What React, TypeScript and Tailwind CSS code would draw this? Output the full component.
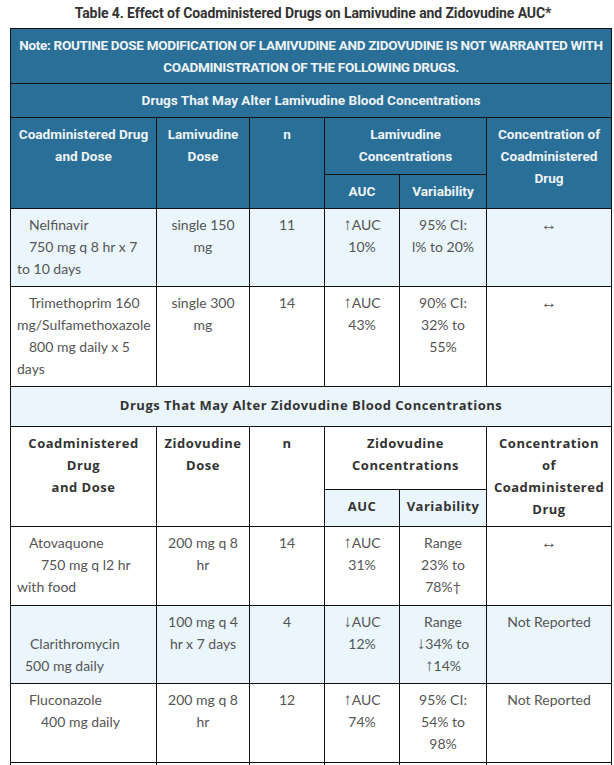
import React from "react";

const body = "font-['Lato','Liberation_Sans',sans-serif] text-[14px] leading-[22px] text-[#555]";
const hdr = "font-['Roboto','Liberation_Sans',sans-serif] font-bold text-[13.6px] leading-[22px] text-[#eef3f6]";
const hdr2 = "font-['Open_Sans','Liberation_Sans',sans-serif] font-bold text-[13px] tracking-[0.5px] leading-[22px] text-[#333]";
const bd = "border border-[#111]";

function T({ s }: { s: string }) {
  const parts = s.split(/([↑↓↔])/);
  return (
    <>
      {parts.map((p, k) =>
        /[↑↓↔]/.test(p) ? (
          <span
            key={k}
            className={`font-['Liberation_Sans',sans-serif] leading-[22px] ${p === "↔" ? "text-[16px]" : "text-[17px]"}`}
          >
            {p}
          </span>
        ) : (
          <React.Fragment key={k}>{p}</React.Fragment>
        )
      )}
    </>
  );
}

type Line = { t: string; i?: number };

function FirstCol({ lines }: { lines: Line[] }) {
  return (
    <div>
      {lines.map((l, k) => (
        <div key={k} className="whitespace-nowrap h-[22px]" style={{ paddingLeft: l.i ?? 0 }}>
          {l.t}
        </div>
      ))}
    </div>
  );
}

function Lines({ lines }: { lines: string[] }) {
  return (
    <div>
      {lines.map((l, k) => (
        <div key={k} className="whitespace-nowrap h-[22px]">
          <T s={l} />
        </div>
      ))}
    </div>
  );
}

type Row = {
  bg: string;
  h: string;
  first: Line[];
  dose: string[];
  n: string;
  auc: string[];
  vari: string[];
  conc: string[];
};

const rows1: Row[] = [
  {
    bg: "bg-[#eaf5fc]",
    h: "h-[78px]",
    first: [
      { t: "Nelfinavir", i: 12 },
      { t: "750 mg q 8 hr x 7", i: 12 },
      { t: "to 10 days" },
    ],
    dose: ["single 150", "mg"],
    n: "11",
    auc: ["↑AUC", "10%"],
    vari: ["95% CI:", "l% to 20%"],
    conc: ["↔"],
  },
  {
    bg: "bg-white",
    h: "h-[100px]",
    first: [
      { t: "Trimethoprim 160", i: 12 },
      { t: "mg/Sulfamethoxazole" },
      { t: "800 mg daily x 5", i: 12 },
      { t: "days" },
    ],
    dose: ["single 300", "mg"],
    n: "14",
    auc: ["↑AUC", "43%"],
    vari: ["90% CI:", "32% to", "55%"],
    conc: ["↔"],
  },
];

const rows2: Row[] = [
  {
    bg: "bg-white",
    h: "h-[79px]",
    first: [
      { t: "Atovaquone", i: 12 },
      { t: "750 mg q l2 hr", i: 24 },
      { t: "with food" },
    ],
    dose: ["200 mg q 8", "hr"],
    n: "14",
    auc: ["↑AUC", "31%"],
    vari: ["Range", "23% to", "78%†"],
    conc: ["↔"],
  },
  {
    bg: "bg-[#eaf5fc]",
    h: "h-[78px]",
    first: [{ t: "" }, { t: "Clarithromycin", i: 13 }, { t: "500 mg daily", i: 8 }],
    dose: ["100 mg q 4", "hr x 7 days"],
    n: "4",
    auc: ["↓AUC", "12%"],
    vari: ["Range", "↓34% to", "↑14%"],
    conc: ["Not Reported"],
  },
  {
    bg: "bg-white",
    h: "h-[79px]",
    first: [
      { t: "Fluconazole", i: 12 },
      { t: "400 mg daily", i: 24 },
    ],
    dose: ["200 mg q 8", "hr"],
    n: "12",
    auc: ["↑AUC", "74%"],
    vari: ["95% CI:", "54% to", "98%"],
    conc: ["Not Reported"],
  },
];

function BodyRow({ r }: { r: Row }) {
  const c = `${bd} ${body} align-top px-[6px] pt-[5px] pb-[4px]`;
  return (
    <tr className={`${r.bg} ${r.h}`}>
      <td className={c}>
        <FirstCol lines={r.first} />
      </td>
      <td className={`${c} text-center`}>
        <Lines lines={r.dose} />
      </td>
      <td className={`${c} text-center`}>
        <Lines lines={[r.n]} />
      </td>
      <td className={`${c} text-center`}>
        <Lines lines={r.auc} />
      </td>
      <td className={`${c} text-center`}>
        <Lines lines={r.vari} />
      </td>
      <td className={`${c} text-center`}>
        <Lines lines={r.conc} />
      </td>
    </tr>
  );
}

export default function App() {
  const hc = `${bd} ${hdr} align-top text-center px-[6px] pt-[5px] pb-[4px] bg-[#2a6f97]`;
  const h2c = `${bd} ${hdr2} align-top text-center px-[4px] pt-[5px] pb-[4px]`;
  return (
    <div className="bg-white w-[614px] h-[765px] overflow-hidden">
      <div className="h-[28px] flex items-center justify-center pl-[12px] pb-[2px] font-['Roboto','Liberation_Sans',sans-serif] font-bold text-[14px] tracking-[-0.1px] text-[#333]">
        Table 4. Effect of Coadministered Drugs on Lamivudine and Zidovudine AUC*
      </div>
      <table className="ml-[10px] w-[601px] table-fixed border-collapse">
        <colgroup>
          <col className="w-[146px]" />
          <col className="w-[93px]" />
          <col className="w-[75px]" />
          <col className="w-[75px]" />
          <col className="w-[87px]" />
          <col className="w-[125px]" />
        </colgroup>
        <tbody>
          <tr className="h-[55px]">
            <td colSpan={6} className={`${hc}`}>
              <div className="whitespace-nowrap tracking-[-0.3px] text-[13.5px]">
                Note: ROUTINE DOSE MODIFICATION OF LAMIVUDINE AND ZIDOVUDINE IS NOT WARRANTED WITH
              </div>
              <div className="whitespace-nowrap tracking-[-0.3px] text-[13.5px]">
                COADMINISTRATION OF THE FOLLOWING DRUGS.
              </div>
            </td>
          </tr>
          <tr className="h-[34px]">
            <td colSpan={6} className={hc}>
              Drugs That May Alter Lamivudine Blood Concentrations
            </td>
          </tr>
          <tr className="h-[57px]">
            <td rowSpan={2} className={hc}>
              <Lines lines={["Coadministered Drug", "and Dose"]} />
            </td>
            <td rowSpan={2} className={hc}>
              <Lines lines={["Lamivudine", "Dose"]} />
            </td>
            <td rowSpan={2} className={hc}>
              n
            </td>
            <td colSpan={2} className={hc}>
              <Lines lines={["Lamivudine", "Concentrations"]} />
            </td>
            <td rowSpan={2} className={hc}>
              <Lines lines={["Concentration of", "Coadministered", "Drug"]} />
            </td>
          </tr>
          <tr className="h-[34px]">
            <td className={hc}>AUC</td>
            <td className={hc}>Variability</td>
          </tr>
          {rows1.map((r, k) => (
            <BodyRow key={k} r={r} />
          ))}
          <tr className="h-[40px]">
            <td colSpan={6} className={`${bd} ${hdr2} text-center align-middle bg-[#eaf5fc] pb-[3px]`}>
              Drugs That May Alter Zidovudine Blood Concentrations
            </td>
          </tr>
          <tr className="h-[63px]">
            <td rowSpan={2} className={`${h2c} bg-white`}>
              <Lines lines={["Coadministered", "Drug", "and Dose"]} />
            </td>
            <td rowSpan={2} className={`${h2c} bg-white`}>
              <Lines lines={["Zidovudine", "Dose"]} />
            </td>
            <td rowSpan={2} className={`${h2c} bg-white`}>
              n
            </td>
            <td colSpan={2} className={`${h2c} bg-white`}>
              <Lines lines={["Zidovudine", "Concentrations"]} />
            </td>
            <td rowSpan={2} className={`${h2c} bg-white`}>
              <Lines lines={["Concentration", "of", "Coadministered", "Drug"]} />
            </td>
          </tr>
          <tr className="h-[37px]">
            <td className={`${h2c} bg-[#eaf5fc]`}>AUC</td>
            <td className={`${h2c} bg-[#eaf5fc]`}>Variability</td>
          </tr>
          {rows2.map((r, k) => (
            <BodyRow key={k} r={r} />
          ))}
          <tr className="h-[40px] bg-white">
            <td className={bd}></td>
            <td className={bd}></td>
            <td className={bd}></td>
            <td className={bd}></td>
            <td className={bd}></td>
            <td className={bd}></td>
          </tr>
        </tbody>
      </table>
    </div>
  );
}
